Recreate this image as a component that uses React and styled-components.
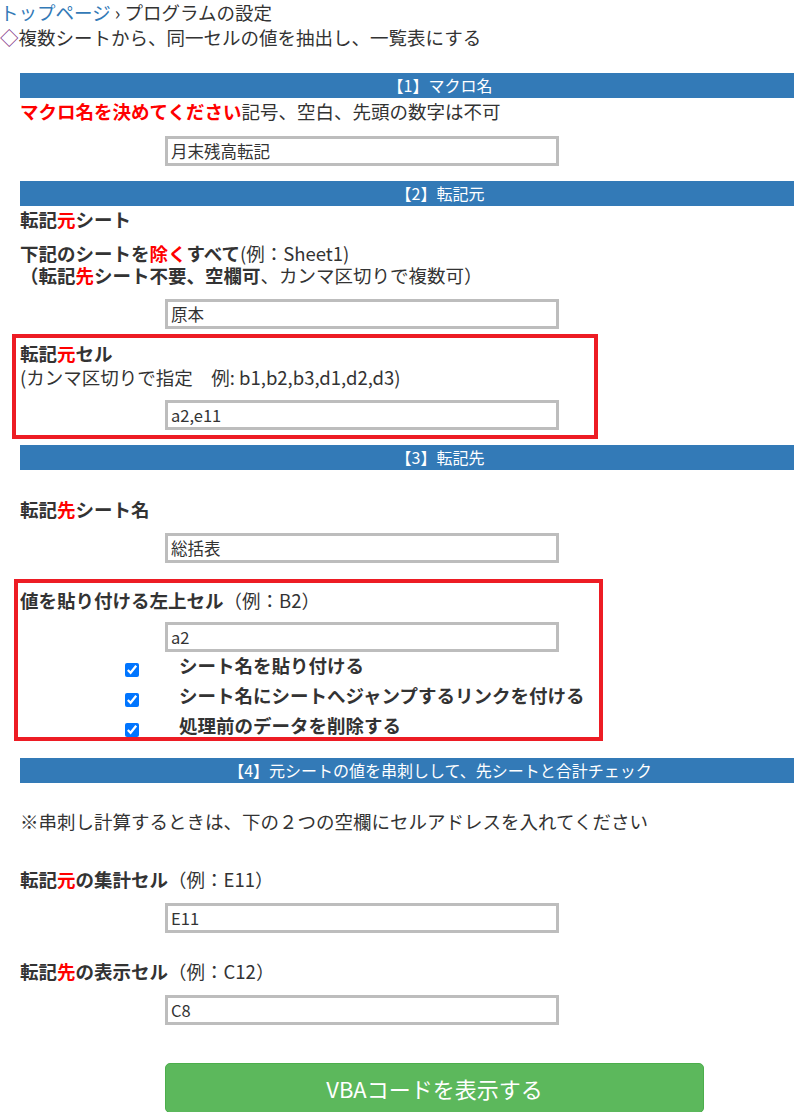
import React from "react";
import styled, { createGlobalStyle } from "styled-components";

const GlobalStyle = createGlobalStyle`
  html, body {
    margin: 0;
    padding: 0;
    background: #fff;
    overflow-x: hidden;
  }
  body {
    font-family: "Noto Sans CJK JP", "Noto Sans", sans-serif;
    font-size: 18.5px;
    color: #333;
  }
`;

const Page = styled.div`
  width: 794px;
`;

const Crumbs = styled.div`
  line-height: 25px;
  white-space: nowrap;
  a {
    color: #337ab7;
    text-decoration: none;
  }
`;

const Lead = styled.div`
  line-height: 25px;
  white-space: nowrap;
  .mark {
    color: #80307f;
  }
`;

const Body = styled.div`
  padding-left: 20px;
  display: flex;
  flex-direction: column;
`;

const SectionBar = styled.div`
  height: 25px;
  line-height: 25px;
  margin-top: ${(p) => p.$top}px;
  background: #337ab7;
  color: #fff;
  font-size: 16px;
  text-align: center;
  padding-left: 66px;
  white-space: nowrap;
`;

const Line = styled.div`
  line-height: ${(p) => p.$lh || 26}px;
  margin-top: ${(p) => p.$top || 0}px;
  white-space: nowrap;
`;

const B = styled.b`
  font-weight: 700;
`;

const Red = styled.span`
  color: #ff0000;
  font-weight: 700;
`;

const Field = styled.input`
  box-sizing: border-box;
  display: block;
  width: 394px;
  height: 30px;
  margin: ${(p) => p.$top || 11}px 0 0 145px;
  border: 3px solid #bdbdbd;
  padding: 0 3px;
  font-family: "Noto Sans CJK JP", "Noto Sans", sans-serif;
  font-size: 16.5px;
  color: #333;
  background: #fff;
  outline: none;
`;

const Marked = styled.div`
  margin-top: ${(p) => p.$top}px;
  margin-left: ${(p) => p.$shift}px;
  width: ${(p) => p.$w}px;
  box-sizing: border-box;
  border: 4px solid #ed1c24;
  padding: ${(p) => p.$pt}px 0 ${(p) => p.$pb}px ${(p) => -p.$shift - 4}px;
  display: flex;
  flex-direction: column;
`;

const Checks = styled.div`
  display: flex;
  flex-direction: column;
`;

const CheckRow = styled.label`
  display: flex;
  align-items: flex-start;
  height: 30px;
  &:last-child {
    height: 25px;
  }
  input {
    width: 14px;
    height: 14px;
    margin: 11px 0 0 ${(p) => p.$boxLeft}px;
    accent-color: #0075ff;
  }
  span {
    margin-left: 40px;
    line-height: 26px;
    font-weight: 700;
    white-space: nowrap;
  }
`;

const ShowButton = styled.button`
  margin: 38px 0 0 145px;
  width: 539px;
  height: 50px;
  border: 1px solid #4cae4c;
  border-radius: 5px;
  background: #5cb85c;
  color: #fff;
  font-family: "Noto Sans CJK JP", "Noto Sans", sans-serif;
  font-size: 22px;
  cursor: pointer;
`;

const App = () => {
  return (
    <Page>
      <GlobalStyle />
      <Crumbs>
        <a href="#top">トップページ</a> › プログラムの設定
      </Crumbs>
      <Lead>
        <span className="mark">◇</span>複数シートから、同一セルの値を抽出し、一覧表にする
      </Lead>
      <Body>
        <SectionBar $top={23}>【1】マクロ名</SectionBar>
        <Line>
          <Red>マクロ名を決めてください</Red>記号、空白、先頭の数字は不可
        </Line>
        <Field $top={12} defaultValue="月末残高転記" />

        <SectionBar $top={15}>【2】転記元</SectionBar>
        <Line>
          <B>
            転記<Red>元</Red>シート
          </B>
        </Line>
        <Line $top={10} $lh={22}>
          <B>
            下記のシートを<Red>除く</Red>すべて
          </B>
          (例：Sheet1)
        </Line>
        <Line $lh={22}>
          <B>
            （転記<Red>先</Red>シート不要、空欄可
          </B>
          、カンマ区切りで複数可）
        </Line>
        <Field $top={13} defaultValue="原本" />

        <Marked $top={5} $shift={-8} $w={586} $pt={3} $pb={5}>
          <Line $lh={24}>
            <B>
              転記<Red>元</Red>セル
            </B>
          </Line>
          <Line $lh={24}>(カンマ区切りで指定　例: b1,b2,b3,d1,d2,d3)</Line>
          <Field $top={11} defaultValue="a2,e11" />
        </Marked>

        <SectionBar $top={6}>【3】転記先</SectionBar>
        <Line $top={26}>
          <B>
            転記<Red>先</Red>シート名
          </B>
        </Line>
        <Field defaultValue="総括表" />

        <Marked $top={16} $shift={-6} $w={589} $pt={4} $pb={0}>
          <Line>
            <B>値を貼り付ける左上セル</B>（例：B2）
          </Line>
          <Field $top={9} defaultValue="a2" />
          <Checks>
            <CheckRow $boxLeft={105}>
              <input type="checkbox" defaultChecked />
              <span>シート名を貼り付ける</span>
            </CheckRow>
            <CheckRow $boxLeft={105}>
              <input type="checkbox" defaultChecked />
              <span>シート名にシートへジャンプするリンクを付ける</span>
            </CheckRow>
            <CheckRow $boxLeft={105}>
              <input type="checkbox" defaultChecked />
              <span>処理前のデータを削除する</span>
            </CheckRow>
          </Checks>
        </Marked>

        <SectionBar $top={17}>【4】元シートの値を串刺しして、先シートと合計チェック</SectionBar>
        <Line $top={25}>※串刺し計算するときは、下の２つの空欄にセルアドレスを入れてください</Line>
        <Line $top={32}>
          <B>
            転記<Red>元</Red>の集計セル
          </B>
          （例：E11）
        </Line>
        <Field defaultValue="E11" />
        <Line $top={25}>
          <B>
            転記<Red>先</Red>の表示セル
          </B>
          （例：C12）
        </Line>
        <Field defaultValue="C8" />

        <ShowButton type="button">VBAコードを表示する</ShowButton>
      </Body>
    </Page>
  );
};

export default App;
